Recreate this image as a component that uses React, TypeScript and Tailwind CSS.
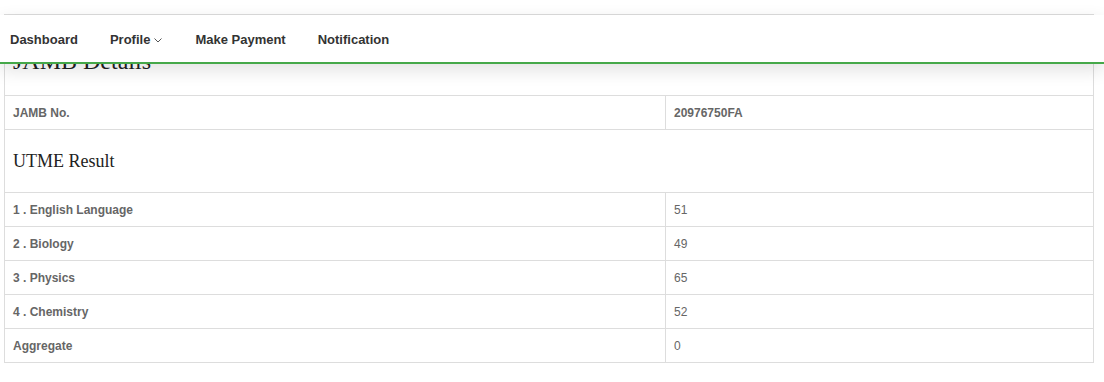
import React from 'react';

const subjects = [
  { label: '1 . English Language', score: 51 },
  { label: '2 . Biology', score: 49 },
  { label: '3 . Physics', score: 65 },
  { label: '4 . Chemistry', score: 52 },
];

const navItems = ['Dashboard', 'Profile', 'Make Payment', 'Notification'];

export default function App() {
  return (
    <div className="relative min-h-[382px] w-[1104px] bg-white" style={{ fontFamily: '"Liberation Sans", Arial, sans-serif' }}>
      {/* top nav overlays the card */}
      <nav className="absolute left-0 right-0 top-[15px] z-10 flex h-[49px] items-center border-b-2 border-[#45a849] bg-white pt-[2px] shadow-[0_6px_18px_rgba(0,0,0,0.12)]">
        {navItems.map((item, i) => (
          <a
            key={item}
            className={`flex items-center text-[13px] font-bold text-[#333] ${i === 0 ? 'pl-[10px] pr-4' : 'px-4'}`}
          >
            {item}
            {item === 'Profile' && (
              <svg width="8" height="5" viewBox="0 0 8 5" className="ml-[4px] mr-[1px] mt-[1px]">
                <path d="M0.5 0.5 L4 4 L7.5 0.5" fill="none" stroke="#555" strokeWidth="1" />
              </svg>
            )}
          </a>
        ))}
      </nav>

      <div className="pl-1 pt-[14px]">
        <table className="w-[1090px] table-fixed border-collapse border border-[#ddd] bg-white text-[12px]">
          <colgroup>
            <col className="w-[661px]" />
            <col />
          </colgroup>
          <tbody>
            <tr>
              <td colSpan={2} className="h-[81px] border border-[#ddd] px-2 pt-[33px] align-top">
                <h3 className="text-[24px] leading-[26px] text-[#222]" style={{ fontFamily: '"Liberation Serif", "Times New Roman", serif' }}>
                  JAMB Details
                </h3>
              </td>
            </tr>
            <tr>
              <td className="h-[34px] border border-[#ddd] px-2 font-bold text-[#666]">JAMB No.</td>
              <td className="h-[34px] border border-[#ddd] px-2 font-bold text-[#666]">20976750FA</td>
            </tr>
            <tr>
              <td colSpan={2} className="h-[63px] border border-[#ddd] px-2">
                <h4 className="text-[18px] text-[#222]" style={{ fontFamily: '"Liberation Serif", "Times New Roman", serif' }}>
                  UTME Result
                </h4>
              </td>
            </tr>
            {subjects.map(s => (
              <tr key={s.label}>
                <td className="h-[34px] border border-[#ddd] px-2 font-bold text-[#666]">{s.label}</td>
                <td className="h-[34px] border border-[#ddd] px-2 text-[#666]">{s.score}</td>
              </tr>
            ))}
            <tr>
              <td className="h-[34px] border border-[#ddd] px-2 font-bold text-[#666]">Aggregate</td>
              <td className="h-[34px] border border-[#ddd] px-2 text-[#666]">0</td>
            </tr>
          </tbody>
        </table>
      </div>
    </div>
  );
}
